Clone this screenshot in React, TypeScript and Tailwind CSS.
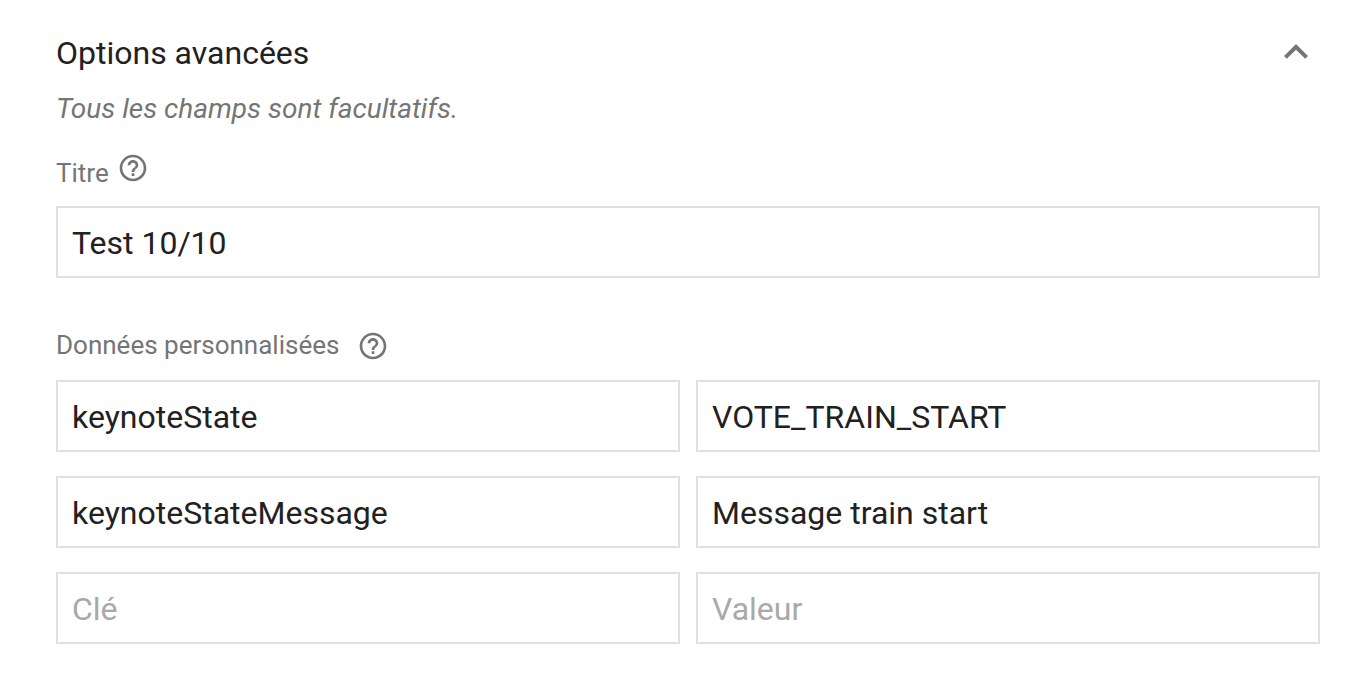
import React from "react";
import { MdHelpOutline, MdKeyboardArrowUp } from "react-icons/md";

const field =
  "block h-[72px] w-full min-w-0 rounded-none border-2 border-[#e0e0e0] bg-white px-3.5 pt-0.5 text-[32px] text-[#212121] outline-none placeholder:text-[#a9a9a9] placeholder:opacity-100 focus:border-[#4285f4]";

const rows = [
  { key: "keynoteState", value: "VOTE_TRAIN_START" },
  { key: "keynoteStateMessage", value: "Message train start" },
  { key: "", value: "" },
];

function Help({ label }: { label: string }) {
  return (
    <button type="button" aria-label={label} className="text-[#757575]">
      <MdHelpOutline className="size-8" />
    </button>
  );
}

export default function App() {
  return (
    <main className="bg-white pt-7 pr-[52px] pb-9 pl-14 font-[Roboto,sans-serif] text-[#212121]">
      <header className="flex h-12 items-center justify-between">
        <h2 className="pt-0.5 text-[32px] leading-10">Options avancées</h2>
        <button type="button" aria-label="Réduire les options avancées" className="text-[#757575]">
          <MdKeyboardArrowUp className="size-12" />
        </button>
      </header>
      <p className="mt-3 pt-px text-[28px] leading-10 text-[#757575] italic">Tous les champs sont facultatifs.</p>

      <div className="mt-[23px] flex h-8 gap-2">
        <label htmlFor="titre" className="pt-[5px] text-[26px] leading-8 text-[#757575]">Titre</label>
        <Help label="Aide sur le titre" />
      </div>
      <input id="titre" defaultValue="Test 10/10" className={`mt-[22px] ${field}`} />

      <fieldset className="mt-[52px]">
        <legend className="flex h-8 items-center gap-[18px] text-[26px] leading-8 text-[#757575]">
          <span className="pb-0.5">Données personnalisées</span>
          <Help label="Aide sur les données personnalisées" />
        </legend>
        <div className="mt-[18px] flex flex-col gap-6">
          {rows.map((row, i) => (
            <div key={i} className="grid grid-cols-2 gap-4">
              <input aria-label={`Clé ${i + 1}`} placeholder="Clé" defaultValue={row.key} className={field} />
              <input aria-label={`Valeur ${i + 1}`} placeholder="Valeur" defaultValue={row.value} className={field} />
            </div>
          ))}
        </div>
      </fieldset>
    </main>
  );
}
